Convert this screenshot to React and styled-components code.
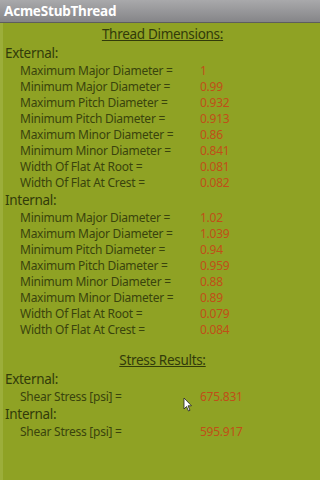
import styled, { createGlobalStyle } from 'styled-components';

const external = [
    ['Maximum Major Diameter =', '1'],
    ['Minimum Major Diameter =', '0.99'],
    ['Maximum Pitch Diameter =', '0.932'],
    ['Minimum Pitch Diameter =', '0.913'],
    ['Maximum Minor Diameter =', '0.86'],
    ['Minimum Minor Diameter =', '0.841'],
    ['Width Of Flat At Root =', '0.081'],
    ['Width Of Flat At Crest =', '0.082'],
];

const internal = [
    ['Minimum Major Diameter =', '1.02'],
    ['Maximum Major Diameter =', '1.039'],
    ['Minimum Pitch Diameter =', '0.94'],
    ['Maximum Pitch Diameter =', '0.959'],
    ['Minimum Minor Diameter =', '0.88'],
    ['Maximum Minor Diameter =', '0.89'],
    ['Width Of Flat At Root =', '0.079'],
    ['Width Of Flat At Crest =', '0.084'],
];

const Global = createGlobalStyle`
    body{
        margin: 0;
        background: #8fa224;
        font-family: 'Noto Sans', 'Open Sans', sans-serif;
    }
`;

export default function App(){
    const Rows = ({list}) => list.map(([label, value]) => (
        <Row key={label}>
            <Label>{label}</Label>
            <Value>{value}</Value>
        </Row>
    ));
    return(
        <Screen>
            <Global/>
            <TitleBar>AcmeStubThread</TitleBar>
            <Content>
                <Heading>Thread Dimensions:</Heading>
                <Group>External:</Group>
                <Rows list={external}/>
                <Group>Internal:</Group>
                <Rows list={internal}/>
                <Heading top={12}>Stress Results:</Heading>
                <Group>External:</Group>
                <Row><Label>Shear Stress [psi] =</Label><Value>675.831</Value></Row>
                <Group>Internal:</Group>
                <Row><Label>Shear Stress [psi] =</Label><Value>595.917</Value></Row>
            </Content>
            <Cursor width="10" height="16" viewBox="0 0 10 16">
                <path d="M1 1 L1 12 L3.5 9.5 L5.5 14 L7 13.3 L5 8.8 L8.5 8.8 Z" fill="#ffffff" stroke="#222" strokeWidth="0.8"/>
            </Cursor>
        </Screen>
    )
}

const Screen = styled.div`
    position: relative;
    width: 320px;
    height: 480px;
    background: #8fa224;
    box-shadow: inset 3px 0 0 #9cae3a;
    overflow: hidden;
`;

const TitleBar = styled.div`
    height: 23px;
    box-sizing: border-box;
    padding-left: 4px;
    border-bottom: 1px solid #5e5e5e;
    background: linear-gradient(#a9a9ab, #858588);
    color: #ffffff;
    font-weight: 700;
    font-size: 13.5px;
    letter-spacing: -0.2px;
    line-height: 23px;
`;

const Content = styled.div`
    display: flex;
    flex-direction: column;
    padding: 1px 0 0 5px;
`;

const Heading = styled.div`
    height: 20px;
    margin-top: ${p => p.top || 0}px;
    text-align: center;
    font-size: 13.5px;
    letter-spacing: -0.3px;
    line-height: 20px;
    color: #323b0a;
    text-decoration: underline;
`;

const Group = styled.div`
    height: 19px;
    font-size: 13.5px;
    letter-spacing: -0.3px;
    line-height: 19px;
    color: #323b0a;
`;

const Row = styled.div`
    display: flex;
    height: 16px;
    padding-left: 15px;
    font-size: 12px;
    letter-spacing: -0.25px;
    line-height: 16px;
`;

const Label = styled.span`
    width: 180px;
    color: #3a440d;
`;

const Value = styled.span`
    color: #c04f18;
`;

const Cursor = styled.svg`
    position: absolute;
    left: 183px;
    top: 397px;
`;
